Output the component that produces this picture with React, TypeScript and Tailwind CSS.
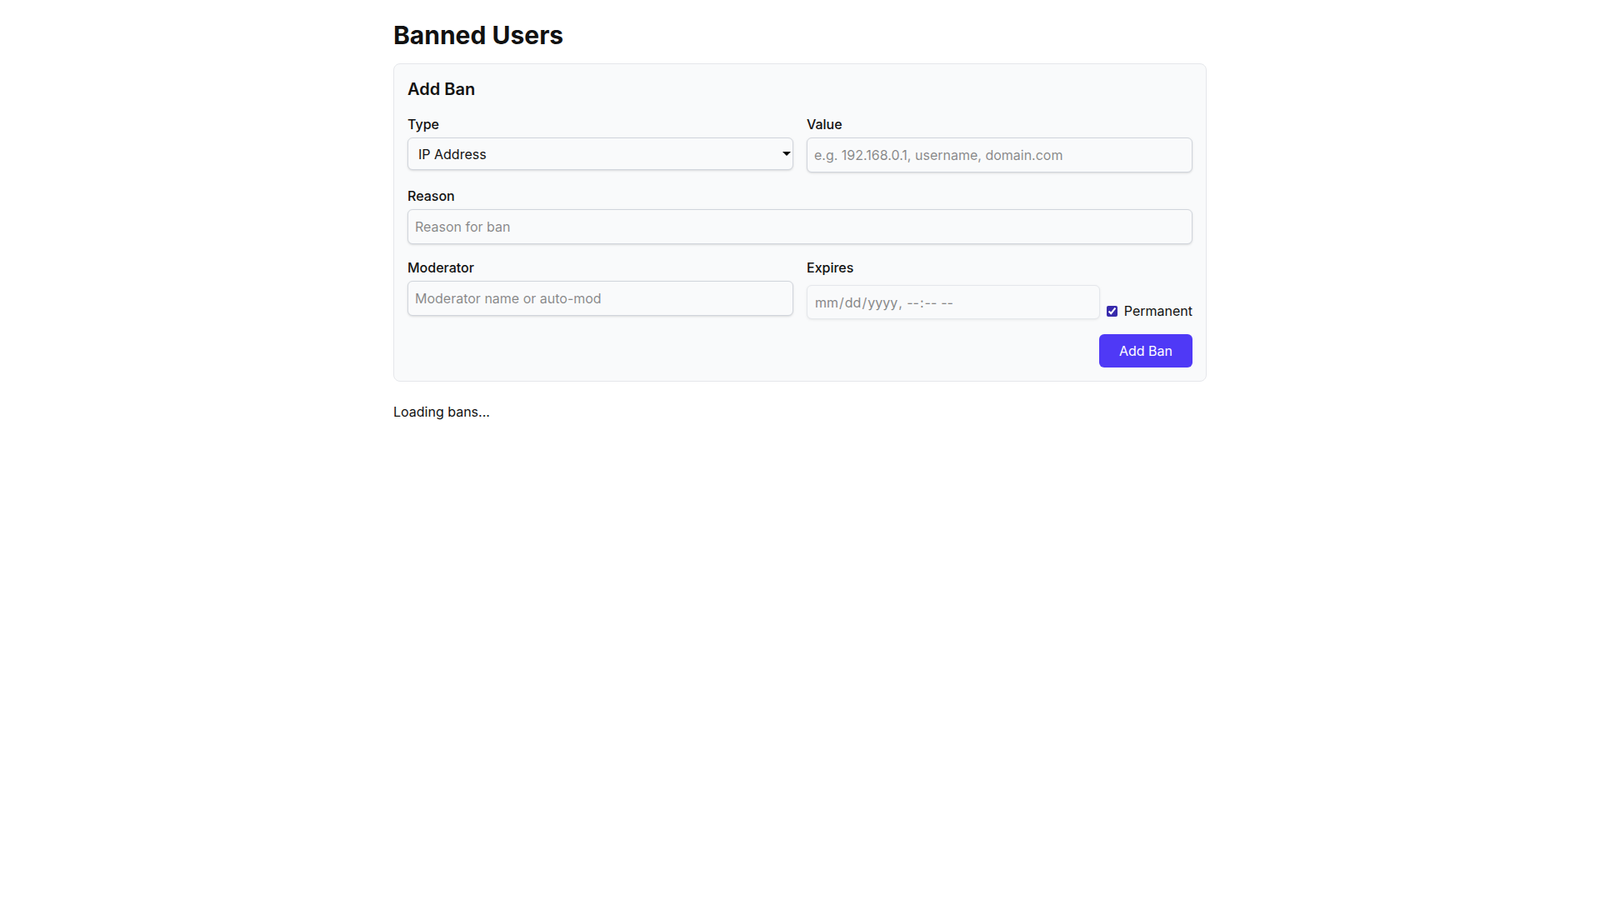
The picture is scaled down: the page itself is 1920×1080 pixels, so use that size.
import React, { useState } from "react";

export default function App() {
  const [permanent, setPermanent] = useState(true);
  const inputCls =
    "block w-full h-[42px] px-2 py-2 rounded-md border border-gray-300 bg-gray-50 shadow-sm outline-none";
  return (
    <div className="min-h-screen bg-white font-['Inter',sans-serif] text-base text-[#111]">
      <div className="max-w-5xl mx-auto p-6">
        <h1 className="text-3xl font-bold mb-4">Banned Users</h1>
        <form
          className="bg-gray-50 border border-gray-200 rounded-lg p-4"
          onSubmit={(e) => e.preventDefault()}
        >
          <h2 className="text-xl leading-7 font-semibold mb-4">Add Ban</h2>
          <div className="grid grid-cols-2 gap-4">
            <div>
              <label className="block font-medium mb-1">Type</label>
              <div className="relative">
                <select className="block w-full h-[39px] pl-3 pr-6 rounded-md border border-gray-300 bg-gray-50 shadow-sm outline-none appearance-none">
                  <option>IP Address</option>
                  <option>Username</option>
                  <option>Domain</option>
                </select>
                <svg
                  className="pointer-events-none absolute right-[3px] top-[17px]"
                  width="10"
                  height="5"
                  viewBox="0 0 10 5"
                >
                  <path d="M0 0 L10 0 L5 5 Z" fill="#000" />
                </svg>
              </div>
            </div>
            <div>
              <label className="block font-medium mb-1">Value</label>
              <input
                className={inputCls}
                placeholder="e.g. 192.168.0.1, username, domain.com"
              />
            </div>
            <div className="col-span-2">
              <label className="block font-medium mb-1">Reason</label>
              <input className={inputCls} placeholder="Reason for ban" />
            </div>
            <div>
              <label className="block font-medium mb-1">Moderator</label>
              <input
                className={inputCls}
                placeholder="Moderator name or auto-mod"
              />
            </div>
            <div>
              <label className="block font-medium mb-1">Expires</label>
              <div className="flex items-end gap-2 pt-[5px]">
                <input
                  type="datetime-local"
                  disabled={permanent}
                  className="block flex-1 min-w-0 h-[41px] mb-[2px] px-2 rounded-md border border-gray-300 bg-gray-50 shadow-sm outline-none disabled:opacity-50 [&::-webkit-calendar-picker-indicator]:hidden"
                />
                <label className="flex items-center gap-2 whitespace-nowrap">
                  <input
                    type="checkbox"
                    checked={permanent}
                    onChange={(e) => setPermanent(e.target.checked)}
                    className="w-[13px] h-[13px] accent-indigo-800"
                  />
                  <span>Permanent</span>
                </label>
              </div>
            </div>
            <div className="col-span-2 flex justify-end">
              <button
                type="submit"
                className="px-6 py-2 rounded-md bg-indigo-600 text-white"
              >
                Add Ban
              </button>
            </div>
          </div>
        </form>
        <p className="mt-6">Loading bans...</p>
      </div>
    </div>
  );
}
